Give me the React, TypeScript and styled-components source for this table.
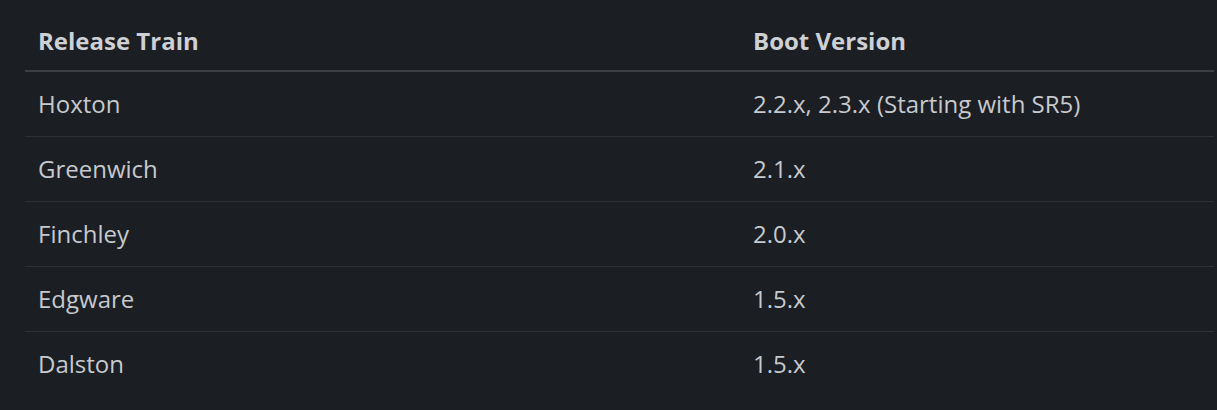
import React from 'react';
import styled, { createGlobalStyle } from 'styled-components';

const GlobalStyle = createGlobalStyle`
  html, body {
    margin: 0;
    padding: 0;
    background-color: #1b1e22;
  }
`;

const Wrapper = styled.div`
  padding: 11px 3px 0 25px;
  font-family: 'Open Sans', 'Liberation Sans', sans-serif;
`;

const Table = styled.table`
  width: 100%;
  border-collapse: collapse;
  border-spacing: 0;
`;

const HeadCell = styled.th<{ $width?: number }>`
  ${(p) => (p.$width ? `width: ${p.$width}px;` : '')}
  height: 59px;
  padding: 0 13px;
  text-align: left;
  vertical-align: middle;
  font-size: 24px;
  line-height: 36px;
  font-weight: 700;
  color: #cdd0d5;
  border-bottom: 2px solid #3c3f44;
`;

const Row = styled.tr<{ $last?: boolean }>`
  border-bottom: ${(p) => (p.$last ? 'none' : '1px solid #2d3035')};
`;

const Cell = styled.td`
  height: 64px;
  padding: 0 13px;
  vertical-align: middle;
  font-size: 24px;
  line-height: 36px;
  color: #c6c9ce;
`;

const trains = [
  { name: 'Hoxton', boot: '2.2.x, 2.3.x (Starting with SR5)' },
  { name: 'Greenwich', boot: '2.1.x' },
  { name: 'Finchley', boot: '2.0.x' },
  { name: 'Edgware', boot: '1.5.x' },
  { name: 'Dalston', boot: '1.5.x' },
];

const App = () => {
  return (
    <Wrapper>
      <GlobalStyle />
      <Table>
        <thead>
          <tr>
            <HeadCell $width={689}>Release Train</HeadCell>
            <HeadCell>Boot Version</HeadCell>
          </tr>
        </thead>
        <tbody>
          {trains.map((t, i) => (
            <Row key={t.name} $last={i === trains.length - 1}>
              <Cell>{t.name}</Cell>
              <Cell>{t.boot}</Cell>
            </Row>
          ))}
        </tbody>
      </Table>
    </Wrapper>
  );
};

export default App;
